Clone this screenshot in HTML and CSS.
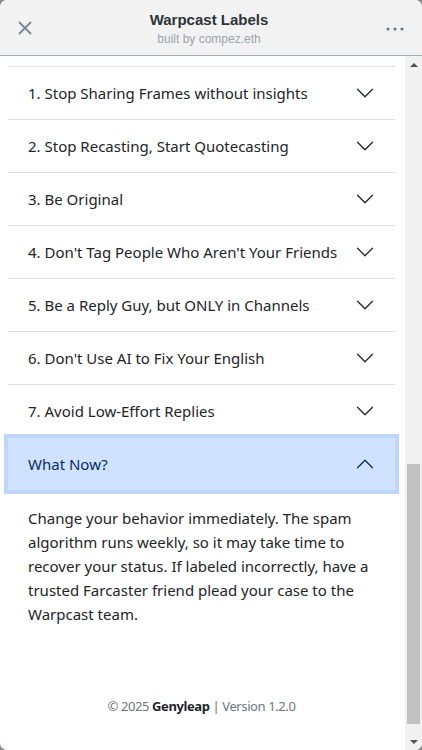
FILE: index.html
```html
<!DOCTYPE html>
<html lang="en">
<head>
    <meta charset="UTF-8">
    <meta name="viewport" content="width=device-width, initial-scale=1.0">
    <title>Warpcast Labels</title>
    <link rel="stylesheet" href="styles.css">
</head>
<body>

    <div class="frame">
        <header class="topbar">
            <button class="icon-btn" aria-label="Close">
                <svg width="14" height="14" viewBox="0 0 14 14">
                    <path d="M1.5 1.5L12.5 12.5M12.5 1.5L1.5 12.5" stroke="#7b8794" stroke-width="1.8" stroke-linecap="round" fill="none"/>
                </svg>
            </button>
            <div class="title">
                <h1>Warpcast Labels</h1>
                <p>built by compez.eth</p>
            </div>
            <button class="icon-btn" aria-label="More">
                <svg width="18" height="4" viewBox="0 0 18 4">
                    <circle cx="2" cy="2" r="1.6" fill="#6b7785"/>
                    <circle cx="9" cy="2" r="1.6" fill="#6b7785"/>
                    <circle cx="16" cy="2" r="1.6" fill="#6b7785"/>
                </svg>
            </button>
        </header>

        <div class="viewport">
            <main class="content">
                <div class="accordion">
                    <div class="item">
                        <button class="item-btn"><span>1. Stop Sharing Frames without insights</span><i class="chevron"></i></button>
                    </div>
                    <div class="item">
                        <button class="item-btn"><span>2. Stop Recasting, Start Quotecasting</span><i class="chevron"></i></button>
                    </div>
                    <div class="item">
                        <button class="item-btn"><span>3. Be Original</span><i class="chevron"></i></button>
                    </div>
                    <div class="item">
                        <button class="item-btn"><span>4. Don't Tag People Who Aren't Your Friends</span><i class="chevron"></i></button>
                    </div>
                    <div class="item">
                        <button class="item-btn"><span>5. Be a Reply Guy, but ONLY in Channels</span><i class="chevron"></i></button>
                    </div>
                    <div class="item">
                        <button class="item-btn"><span>6. Don't Use AI to Fix Your English</span><i class="chevron"></i></button>
                    </div>
                    <div class="item">
                        <button class="item-btn"><span>7. Avoid Low-Effort Replies</span><i class="chevron"></i></button>
                    </div>
                    <div class="item open">
                        <button class="item-btn"><span>What Now?</span><i class="chevron"></i></button>
                        <div class="item-body">
                            Change your behavior immediately. The spam algorithm runs weekly, so it may take time to recover your status. If labeled incorrectly, have a trusted Farcaster friend plead your case to the Warpcast team.
                        </div>
                    </div>
                </div>

                <footer class="footer">
                    &copy; 2025 <strong>Genyleap</strong> | Version 1.2.0
                </footer>
            </main>

            <div class="scrollbar">
                <div class="arrow up"></div>
                <div class="track">
                    <div class="thumb"></div>
                </div>
                <div class="arrow down"></div>
            </div>
        </div>
    </div>

</body>
</html>
```

FILE: styles.css
```css
html, body {
    margin: 0;
    padding: 0;
    height: 100%;
    background-color: #8a8a8a;
}

body {
    font-family: "Noto Sans", "Open Sans", Arial, sans-serif;
    color: #212529;
}

.frame {
    height: 750px;
    display: flex;
    flex-direction: column;
    background-color: #ffffff;
    border-radius: 7px;
    overflow: hidden;
}

/* top bar */
.topbar {
    height: 55px;
    flex: none;
    display: flex;
    align-items: center;
    justify-content: space-between;
    padding: 0 14px 0 14px;
    background-color: #f2f2f2;
    border-bottom: 1px solid #a9b0b7;
}

.icon-btn {
    width: 22px;
    height: 22px;
    padding: 0;
    border: none;
    background: none;
    display: flex;
    align-items: center;
    justify-content: center;
}

.icon-btn:last-child {
    width: 26px;
    margin-top: 2px;
}

.title {
    text-align: center;
    font-family: "Liberation Sans", Arial, sans-serif;
    margin-top: 1px;
}

.title h1 {
    margin: 0;
    font-size: 15px;
    font-weight: bold;
    line-height: 18px;
    color: #2d3339;
}

.title p {
    margin: 3px 0 0;
    font-size: 12px;
    line-height: 14px;
    color: #9aa4ae;
}

/* scrolling area */
.viewport {
    flex: 1;
    display: flex;
    min-height: 0;
}

.content {
    flex: 1;
    overflow: hidden;
    padding: 10px 10px 0 8px;
}

.accordion .item {
    border-bottom: 1px solid #dee2e6;
}

.accordion .item:first-child {
    border-top: 1px solid #dee2e6;
}

.accordion .item:last-child {
    border-bottom: none;
}

.item-btn {
    width: 100%;
    height: 52px;
    display: flex;
    align-items: center;
    justify-content: space-between;
    padding: 0 20px;
    border: none;
    background: #ffffff;
    font: inherit;
    font-size: 15px;
    color: #212529;
    text-align: left;
}

.chevron {
    width: 20px;
    height: 20px;
    flex: none;
    background-image: url("data:image/svg+xml,%3csvg xmlns='http://www.w3.org/2000/svg' viewBox='0 0 16 16' fill='none' stroke='%23212529' stroke-linecap='round' stroke-linejoin='round'%3e%3cpath d='M2 5L8 11L14 5'/%3e%3c/svg%3e");
    background-size: 20px;
    background-repeat: no-repeat;
}

.open .item-btn {
    position: relative;
    z-index: 1;
    background-color: #cfe2ff;
    color: #052c65;
    box-shadow: 0 0 0 4px #bcd6fd;
}

.open .chevron {
    background-image: url("data:image/svg+xml,%3csvg xmlns='http://www.w3.org/2000/svg' viewBox='0 0 16 16' fill='none' stroke='%23052c65' stroke-linecap='round' stroke-linejoin='round'%3e%3cpath d='M2 5L8 11L14 5'/%3e%3c/svg%3e");
    transform: rotate(180deg);
}

.item-body {
    padding: 16px 20px;
    font-size: 15px;
    line-height: 24px;
}

.footer {
    padding-top: 54px;
    text-align: center;
    font-size: 13px;
    letter-spacing: -0.4px;
    line-height: 21px;
    color: #6c757d;
}

.footer strong {
    color: #212529;
}

/* scrollbar column */
.scrollbar {
    width: 17px;
    flex: none;
    display: flex;
    flex-direction: column;
    background-color: #f1f1f1;
}

.arrow {
    height: 17px;
    flex: none;
    display: flex;
    align-items: center;
    justify-content: center;
}

.arrow::before {
    content: "";
    border-left: 4px solid transparent;
    border-right: 4px solid transparent;
}

.arrow.up::before {
    border-bottom: 4px solid #505050;
}

.arrow.down::before {
    border-top: 4px solid #505050;
}

.track {
    flex: 1;
    display: flex;
    flex-direction: column;
    justify-content: flex-end;
    padding: 0 2px 9px;
}

.thumb {
    height: 260px;
    background-color: #c1c1c1;
}
```
